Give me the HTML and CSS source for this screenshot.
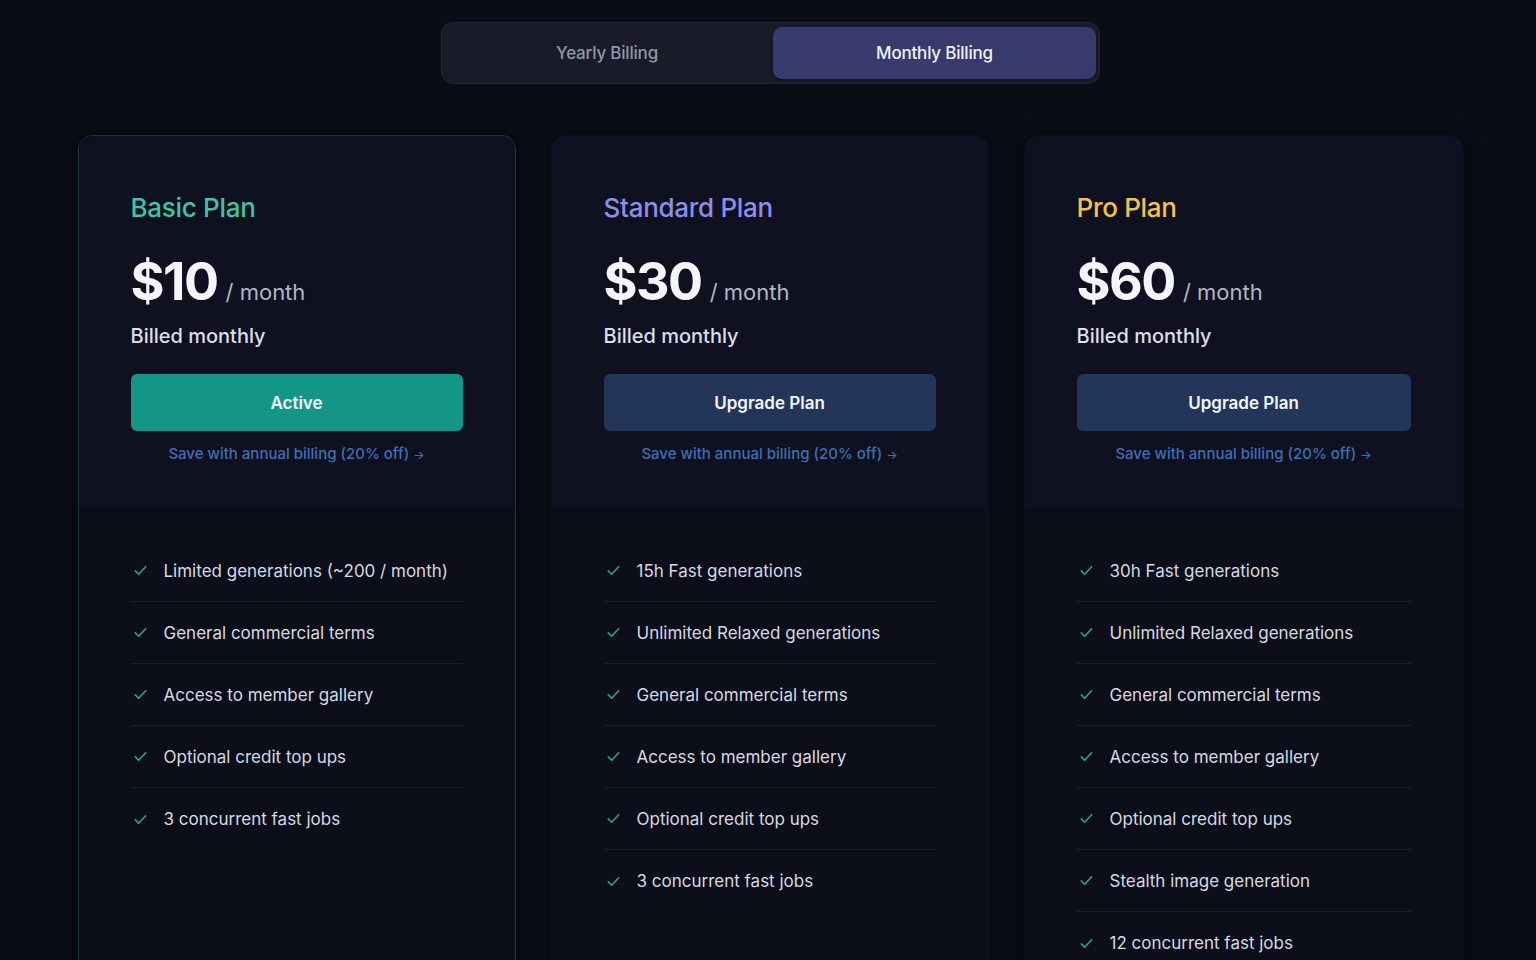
FILE: index.html
```html
<!DOCTYPE html>
<html lang="en">
<head>
<meta charset="utf-8">
<title>Pricing</title>
<link rel="stylesheet" href="styles.css">
</head>
<body>
<main class="page">
  <div class="toggle">
    <button class="toggle-btn">Yearly Billing</button>
    <button class="toggle-btn is-active">Monthly Billing</button>
  </div>

  <section class="plans">
    <article class="card card-basic">
      <div class="card-top">
        <h2 class="plan-name basic">Basic Plan</h2>
        <div class="price"><span class="amount">$10</span><span class="per">/ month</span></div>
        <p class="billed">Billed monthly</p>
        <button class="cta cta-active">Active</button>
        <a class="save" href="#">Save with annual billing (20% off) <span class="arrow">→</span></a>
      </div>
      <ul class="features">
        <li><svg class="check" viewBox="0 0 16 16"><path d="M2.5 8.5l3.5 3.5 7.5-8"/></svg>Limited generations (~200 / month)</li>
        <li><svg class="check" viewBox="0 0 16 16"><path d="M2.5 8.5l3.5 3.5 7.5-8"/></svg>General commercial terms</li>
        <li><svg class="check" viewBox="0 0 16 16"><path d="M2.5 8.5l3.5 3.5 7.5-8"/></svg>Access to member gallery</li>
        <li><svg class="check" viewBox="0 0 16 16"><path d="M2.5 8.5l3.5 3.5 7.5-8"/></svg>Optional credit top ups</li>
        <li><svg class="check" viewBox="0 0 16 16"><path d="M2.5 8.5l3.5 3.5 7.5-8"/></svg>3 concurrent fast jobs</li>
      </ul>
    </article>

    <article class="card">
      <div class="card-top">
        <h2 class="plan-name standard">Standard Plan</h2>
        <div class="price"><span class="amount">$30</span><span class="per">/ month</span></div>
        <p class="billed">Billed monthly</p>
        <button class="cta">Upgrade Plan</button>
        <a class="save" href="#">Save with annual billing (20% off) <span class="arrow">→</span></a>
      </div>
      <ul class="features">
        <li><svg class="check" viewBox="0 0 16 16"><path d="M2.5 8.5l3.5 3.5 7.5-8"/></svg>15h Fast generations</li>
        <li><svg class="check" viewBox="0 0 16 16"><path d="M2.5 8.5l3.5 3.5 7.5-8"/></svg>Unlimited Relaxed generations</li>
        <li><svg class="check" viewBox="0 0 16 16"><path d="M2.5 8.5l3.5 3.5 7.5-8"/></svg>General commercial terms</li>
        <li><svg class="check" viewBox="0 0 16 16"><path d="M2.5 8.5l3.5 3.5 7.5-8"/></svg>Access to member gallery</li>
        <li><svg class="check" viewBox="0 0 16 16"><path d="M2.5 8.5l3.5 3.5 7.5-8"/></svg>Optional credit top ups</li>
        <li><svg class="check" viewBox="0 0 16 16"><path d="M2.5 8.5l3.5 3.5 7.5-8"/></svg>3 concurrent fast jobs</li>
      </ul>
    </article>

    <article class="card">
      <div class="card-top">
        <h2 class="plan-name pro">Pro Plan</h2>
        <div class="price"><span class="amount">$60</span><span class="per">/ month</span></div>
        <p class="billed">Billed monthly</p>
        <button class="cta">Upgrade Plan</button>
        <a class="save" href="#">Save with annual billing (20% off) <span class="arrow">→</span></a>
      </div>
      <ul class="features">
        <li><svg class="check" viewBox="0 0 16 16"><path d="M2.5 8.5l3.5 3.5 7.5-8"/></svg>30h Fast generations</li>
        <li><svg class="check" viewBox="0 0 16 16"><path d="M2.5 8.5l3.5 3.5 7.5-8"/></svg>Unlimited Relaxed generations</li>
        <li><svg class="check" viewBox="0 0 16 16"><path d="M2.5 8.5l3.5 3.5 7.5-8"/></svg>General commercial terms</li>
        <li><svg class="check" viewBox="0 0 16 16"><path d="M2.5 8.5l3.5 3.5 7.5-8"/></svg>Access to member gallery</li>
        <li><svg class="check" viewBox="0 0 16 16"><path d="M2.5 8.5l3.5 3.5 7.5-8"/></svg>Optional credit top ups</li>
        <li><svg class="check" viewBox="0 0 16 16"><path d="M2.5 8.5l3.5 3.5 7.5-8"/></svg>Stealth image generation</li>
        <li><svg class="check" viewBox="0 0 16 16"><path d="M2.5 8.5l3.5 3.5 7.5-8"/></svg>12 concurrent fast jobs</li>
      </ul>
    </article>
  </section>
</main>
</body>
</html>
```

FILE: styles.css
```css
* { box-sizing: border-box; }

html, body {
  margin: 0;
  height: 100%;
  overflow: hidden;
}

body {
  background: #0a0c16;
  font-family: "Inter", "Liberation Sans", sans-serif;
  color: #dfe1ea;
}

.page {
  display: flex;
  flex-direction: column;
  align-items: center;
  padding-top: 22px;
}

.toggle {
  display: grid;
  grid-template-columns: 324px 323px;
  gap: 4px;
  padding: 4px 3px;
  background: #191b29;
  border: 1px solid #20233a;
  border-radius: 12px;
  margin-left: 5px;
}

.toggle-btn {
  height: 52px;
  border: 0;
  border-radius: 9px;
  background: transparent;
  color: #9396a8;
  font-family: inherit;
  font-size: 17px;
  font-weight: 500;
  letter-spacing: -0.2px;
}

.toggle-btn.is-active {
  background: #363a6d;
  color: #f1f2f8;
  box-shadow: 0 1px 3px rgba(0, 0, 0, 0.4);
}

.plans {
  display: grid;
  grid-template-columns: 438px 438px 440px;
  gap: 36px 35px;
  margin-top: 51px;
  margin-left: 5px;
}

.card {
  border: 1px solid transparent;
  border-radius: 14px;
  background: #0c0e19;
  box-shadow: 0 0 18px rgba(0, 0, 0, 0.35);
  height: 900px;
  overflow: hidden;
}

.card-basic {
  border-color: #1c3539;
}

.card-top {
  display: flex;
  flex-direction: column;
  padding: 54px 52px 0;
  height: 370px;
  background: #0f1121;
}

.plan-name {
  margin: 0;
  font-size: 26px;
  line-height: 36px;
  font-weight: 500;
  letter-spacing: -0.3px;
}

.plan-name.basic { color: #40c4a2; }
.plan-name.standard { color: #8b8fe6; }
.plan-name.pro { color: #f3c24c; }

.price {
  display: flex;
  align-items: baseline;
  gap: 8px;
  margin-top: 24px;
  height: 64px;
}

.amount {
  font-size: 52px;
  font-weight: 700;
  color: #f4f5fa;
  letter-spacing: -1.5px;
  line-height: 64px;
}

.per {
  font-size: 22px;
  color: #b3b6c6;
}

.billed {
  margin: 8px 0 0;
  font-size: 20px;
  line-height: 28px;
  font-weight: 500;
  color: #dcdee8;
}

.cta {
  margin-top: 24px;
  height: 57px;
  border: 0;
  border-radius: 6px;
  background: #233659;
  color: #f4f5fa;
  font-family: inherit;
  font-size: 17px;
  font-weight: 600;
}

.cta-active {
  background: #149687;
}

.save {
  margin-top: 13px;
  text-align: center;
  font-size: 15px;
  line-height: 20px;
  font-weight: 500;
  color: #3f6fb2;
  text-decoration: none;
}

.arrow {
  font-size: 12px;
}

.features {
  list-style: none;
  margin: 0;
  padding: 34px 52px 0;
}

.features li {
  display: flex;
  align-items: center;
  height: 62px;
  border-bottom: 1px solid #1b1e2b;
  font-size: 17px;
  color: #d7d9e2;
}

.features li:last-child {
  border-bottom: 0;
}

.check {
  width: 15px;
  height: 15px;
  margin: 0 16px 0 2px;
  fill: none;
  stroke: #2f9e86;
  stroke-width: 1.8;
  stroke-linecap: round;
  stroke-linejoin: round;
}
```
